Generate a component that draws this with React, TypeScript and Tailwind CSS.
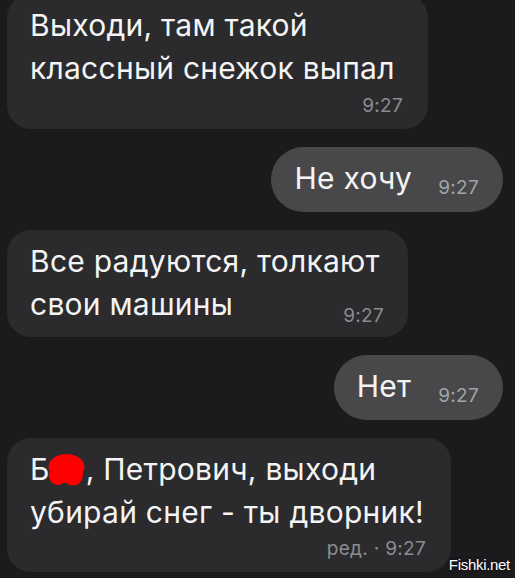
import React from "react";

const font = { fontFamily: "Inter, 'Noto Sans', sans-serif" };

function Time({ children, right }: { children: React.ReactNode; right?: boolean }) {
  return (
    <span
      className={
        "text-[19px] leading-[20px] whitespace-nowrap tracking-[0.3px] " +
        (right ? "text-[#a3a3a7]" : "text-[#8c8c91]")
      }
    >
      {children}
    </span>
  );
}

function Blob() {
  return (
    <svg
      width="37"
      height="33"
      viewBox="0 0 37 33"
      className="inline-block align-[-6px] -ml-[2px] mr-[1px]"
      aria-hidden
    >
      <ellipse cx="18.5" cy="14" rx="18" ry="13" fill="#ff0000" />
      <circle cx="10" cy="23" r="9" fill="#ff0000" />
      <circle cx="25" cy="22.5" r="10" fill="#ff0000" />
      <ellipse cx="17" cy="20" rx="12" ry="10" fill="#ff0000" />
    </svg>
  );
}

const txt = "text-[30px] leading-[43px] tracking-[0.25px]";

export default function App() {
  return (
    <div
      className="relative w-[515px] h-[578px] overflow-hidden bg-[#1b1b1d] pl-[7px] pr-[12px] text-[#f4f4f4]"
      style={font}
    >
      <div className="-mt-[6px] flex flex-col gap-[18px]">
        {/* Bubble 1 */}
        <div className="self-start w-[421px] rounded-[24px] bg-[#2b2b2d] pl-[23px] pr-[25px] pt-[10px] pb-[13px]">
          <p className={txt}>
            Выходи, там такой
            <br />
            классный снежок выпал
          </p>
          <div className="mt-[6px] flex justify-end">
            <Time>9:27</Time>
          </div>
        </div>

        {/* Bubble 2 */}
        <div className="self-end flex items-end h-[65px] rounded-full bg-[#48484a] pl-[23px] pr-[24px] pt-[10px] pb-[12px]">
          <span className={txt}>Не хочу</span>
          <span className="ml-[26px]">
            <Time right>9:27</Time>
          </span>
        </div>

        {/* Bubble 3 */}
        <div className="self-start w-[401px] rounded-[24px] bg-[#2b2b2d] pl-[23px] pr-[24px] pt-[10px] pb-[11px]">
          <p className={txt}>Все радуются, толкают</p>
          <div className="flex items-end justify-between">
            <span className={txt}>свои машины</span>
            <Time>9:27</Time>
          </div>
        </div>

        {/* Bubble 4 */}
        <div className="self-end flex items-end h-[65px] rounded-full bg-[#48484a] pl-[23px] pr-[24px] pt-[10px] pb-[12px]">
          <span className={txt}>Нет</span>
          <span className="ml-[27px]">
            <Time right>9:27</Time>
          </span>
        </div>

        {/* Bubble 5 */}
        <div className="self-start w-[444px] rounded-[24px] bg-[#2b2b2d] pl-[23px] pr-[25px] pt-[10px] pb-[13px]">
          <p className={txt}>
            Б<Blob />, Петрович, выходи
            <br />
            убирай снег - ты дворник!
          </p>
          <div className="mt-[5px] flex justify-end">
            <Time>ред. · 9:27</Time>
          </div>
        </div>
      </div>

      <span
        className="absolute right-[5px] bottom-[5px] text-[15px] leading-[16px] tracking-[-0.3px] text-white [text-shadow:0_0_3px_rgba(0,0,0,0.9)]"
        style={{ fontFamily: "'Liberation Sans', Arial, sans-serif" }}
      >
        Fishki.net
      </span>
    </div>
  );
}
